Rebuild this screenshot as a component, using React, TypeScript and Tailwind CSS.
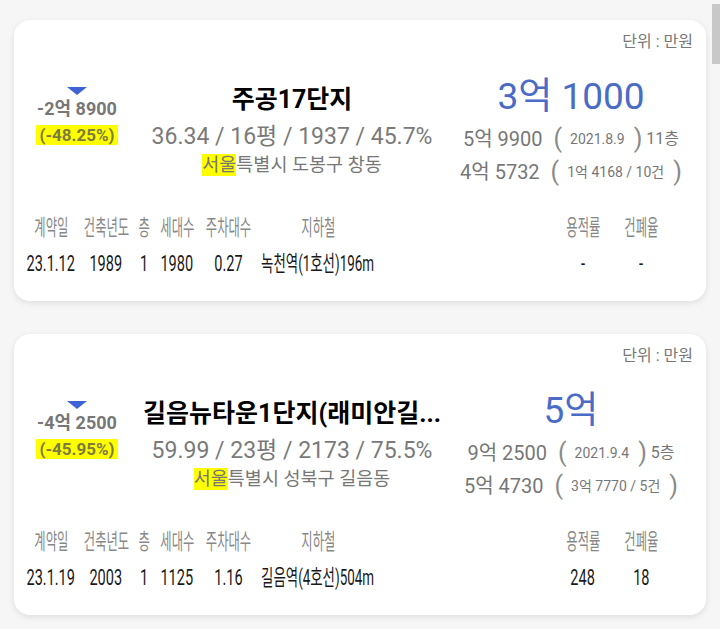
type Deal = {
  title: string;
  price: string;
  diff: string;
  pct: string;
  stats: string;
  city: string;
  addr: string;
  high: { price: string; date: string; floor: string };
  avg: { price: string; detail: string };
  row: string[];
};

const deals: Deal[] = [
  {
    title: '주공17단지',
    price: '3억 1000',
    diff: '-2억 8900',
    pct: '(-48.25%)',
    stats: '36.34 / 16평 / 1937 / 45.7%',
    city: '서울',
    addr: '특별시 도봉구 창동',
    high: { price: '5억 9900', date: '2021.8.9', floor: '11층' },
    avg: { price: '4억 5732', detail: '1억 4168 / 10건' },
    row: ['23.1.12', '1989', '1', '1980', '0.27', '녹천역(1호선)196m', '-', '-'],
  },
  {
    title: '길음뉴타운1단지(래미안길...',
    price: '5억',
    diff: '-4억 2500',
    pct: '(-45.95%)',
    stats: '59.99 / 23평 / 2173 / 75.5%',
    city: '서울',
    addr: '특별시 성북구 길음동',
    high: { price: '9억 2500', date: '2021.9.4', floor: '5층' },
    avg: { price: '5억 4730', detail: '3억 7770 / 5건' },
    row: ['23.1.19', '2003', '1', '1125', '1.16', '길음역(4호선)504m', '248', '18'],
  },
];

// table columns: width of each cell, plus extra left margin before 용적률
const columns = [
  { head: '계약일', cls: 'w-[54px]', scale: 'scale-x-[0.66]' },
  { head: '건축년도', cls: 'w-[56px]', scale: 'scale-x-[0.66]' },
  { head: '층', cls: 'w-[20px]', scale: 'scale-x-[0.66]' },
  { head: '세대수', cls: 'w-[46px]', scale: 'scale-x-[0.66]' },
  { head: '주차대수', cls: 'w-[56px]', scale: 'scale-x-[0.66]' },
  { head: '지하철', cls: 'w-[124px]', scale: 'scale-x-[0.61]' },
  { head: '용적률', cls: 'w-[60px] ml-[173px]', scale: 'scale-x-[0.66]' },
  { head: '건폐율', cls: 'w-[56px]', scale: 'scale-x-[0.66]' },
];

function PriceLine({ price, note, tail }: { price: string; note: string; tail?: string }) {
  return (
    <div className="flex h-[30px] items-center justify-center whitespace-nowrap text-[#777]">
      <span className="text-[20px]">{price}</span>
      <span className="ml-[11px] text-[25px] leading-[30px] text-[#8a8a8a]">(</span>
      <span className="ml-[8px] text-[14px]">{note}</span>
      <span className="ml-[9px] text-[25px] leading-[30px] text-[#8a8a8a]">)</span>
      {tail && <span className="ml-[4px] text-[16px]">{tail}</span>}
    </div>
  );
}

function DealCard({ d }: { d: Deal }) {
  return (
    <div className="h-[281px] rounded-2xl bg-white shadow-[0_2px_6px_rgba(0,0,0,0.1)]">
      <div className="flex h-[32px] justify-end pr-[13px] pt-[12px] text-[16px] leading-[20px] text-[#777]">
        단위 : 만원
      </div>

      <div className="flex h-[160px] pl-[10px]">
        {/* change vs. high */}
        <div className="flex w-[106px] flex-col items-center pt-[35px]">
          <div className="h-0 w-0 border-x-[10px] border-t-[8px] border-x-transparent border-t-[#3e63d6]" />
          <div className="mt-[2px] h-[24px] whitespace-nowrap text-[18px] font-bold leading-[24px] text-[#777]">
            {d.diff}
          </div>
          <div className="mt-[4px] h-[20px] bg-[#ffff00] px-[3px] text-[17px] font-bold leading-[20px] text-[#7d7b40]">
            {d.pct}
          </div>
        </div>

        {/* name, size, address */}
        <div className="ml-[10px] flex w-[304px] flex-col items-center pt-[32px]">
          <div className="h-[32px] whitespace-nowrap text-[25px] font-bold leading-[32px] text-black">{d.title}</div>
          <div className="mt-[5px] h-[32px] whitespace-nowrap text-[23px] leading-[32px] text-[#7a7a7a]">{d.stats}</div>
          <div className="h-[24px] whitespace-nowrap text-[18.5px] leading-[24px] text-[#777]">
            <span className="bg-[#ffff00]">{d.city}</span>
            {d.addr}
          </div>
        </div>

        {/* current price, high, average */}
        <div className="flex w-[254px] flex-col items-center pt-[23px]">
          <div className="h-[44px] whitespace-nowrap text-[37px] leading-[44px] text-[#4a6bc6]">{d.price}</div>
          <div className="mt-[5px]">
            <PriceLine price={d.high.price} note={d.high.date} tail={d.high.floor} />
          </div>
          <div className="mt-[3px]">
            <PriceLine price={d.avg.price} note={d.avg.detail} />
          </div>
        </div>
      </div>

      <div className="pl-[10px]">
        <div className="flex h-[30px] items-center text-[22px] text-[#888]">
          {columns.map((c) => (
            <div key={c.head} className={`${c.cls} flex justify-center whitespace-nowrap`}>
              <span className="inline-block scale-x-[0.56]">{c.head}</span>
            </div>
          ))}
        </div>
        <div className="mt-[6px] flex h-[30px] items-center text-[22px] text-[#1a1a1a]">
          {columns.map((c, i) => (
            <div key={c.head} className={`${c.cls} flex justify-center whitespace-nowrap`}>
              <span className={`inline-block ${c.scale}`}>{d.row[i]}</span>
            </div>
          ))}
        </div>
      </div>
    </div>
  );
}

export default function App() {
  return (
    <div className="relative min-h-[629px] overflow-hidden bg-[#f6f6f6] font-[Roboto,'Noto_Sans_CJK_KR',sans-serif]">
      <div className="flex flex-col gap-[33px] px-[14px] pt-[20px]">
        {deals.map((d) => (
          <DealCard key={d.title} d={d} />
        ))}
      </div>
      {/* scroll thumb */}
      <div className="absolute right-0 top-[4px] h-[60px] w-[8px] bg-[#c8c8c8]" />
    </div>
  );
}
